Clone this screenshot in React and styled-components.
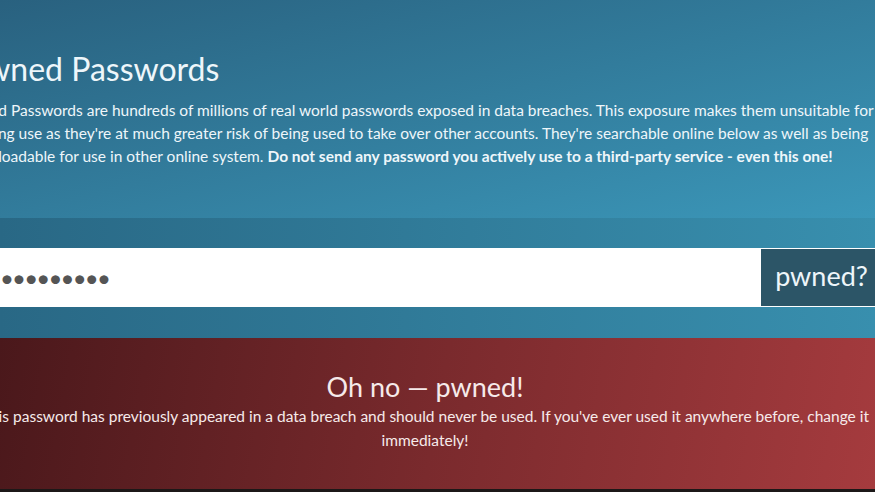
import styled, { createGlobalStyle } from "styled-components";

const GlobalStyle = createGlobalStyle`
  html, body {
    margin: 0;
    padding: 0;
    overflow: hidden;
    background: #1c1818;
  }
  body {
    font-family: Lato, "Open Sans", sans-serif;
  }
`;

const Page = styled.div`
  width: 100%;
`;

// the screenshot is a crop of a wider page, so the content box runs past both edges
const Container = styled.div`
  width: 930px;
  margin-left: -40px;
`;

const Hero = styled.section`
  background: linear-gradient(to bottom right, #29617f, #3b97b9);
`;

const HeroInner = styled(Container)`
  padding: 50px 0 50px;
  color: #eef6fa;
`;

const Title = styled.h1`
  font-size: 32px;
  font-weight: 400;
  line-height: 38px;
  margin: 0 0 11px;
  padding-left: 6px;
`;

const Lead = styled.p`
  font-size: 15.5px;
  line-height: 23px;
  margin: 0;
  b {
    font-weight: 700;
  }
`;

const SearchBand = styled.section`
  background: linear-gradient(to right, #296885, #388fae);
`;

const SearchRow = styled(Container)`
  display: flex;
  padding: 30px 0 31px;
`;

const PasswordInput = styled.input`
  flex: 1;
  height: 59px;
  box-sizing: border-box;
  border: 0;
  outline: none;
  background: #fff;
  padding: 0 0 0 40px;
  font-family: Lato, sans-serif;
  font-size: 24px;
  color: #555;
  letter-spacing: -1.8px;
`;

const PwnedButton = styled.button`
  width: 129px;
  height: 59px;
  border: 0;
  border-top: 1px solid #fff;
  border-bottom: 1px solid #fff;
  background: #2c5567;
  color: #eef6fa;
  font-family: Lato, sans-serif;
  font-size: 27px;
  padding: 0 8px 4px 0;
`;

const Result = styled.section`
  background: linear-gradient(100deg, #4a181b 0%, #7a2a2d 50%, #a53b3e 100%);
  height: 151px;
`;

const ResultInner = styled(Container)`
  padding-top: 33px;
  text-align: center;
  color: #f6eaea;
`;

const ResultTitle = styled.h2`
  font-size: 27px;
  font-weight: 400;
  line-height: 32px;
  margin: 0 0 1px;
`;

const ResultText = styled.p`
  font-size: 15.5px;
  line-height: 24px;
  margin: 0;
`;

export default function App() {
  return (
    <Page>
      <GlobalStyle />
      <Hero>
        <HeroInner>
          <Title>Pwned Passwords</Title>
          <Lead>
            Pwned Passwords are hundreds of millions of real world passwords exposed in data
            breaches. This exposure makes them unsuitable for ongoing use as they're at much
            greater risk of being used to take over other accounts. They're searchable online
            below as well as being downloadable for use in other online system.{" "}
            <b>Do not send any password you actively use to a third-party service - even this one!</b>
          </Lead>
        </HeroInner>
      </Hero>
      <SearchBand>
        <SearchRow>
          <PasswordInput type="password" value="password1" readOnly />
          <PwnedButton>pwned?</PwnedButton>
        </SearchRow>
      </SearchBand>
      <Result>
        <ResultInner>
          <ResultTitle>Oh no — pwned!</ResultTitle>
          <ResultText>
            This password has previously appeared in a data breach and should never be used. If
            you've ever used it anywhere before, change it immediately!
          </ResultText>
        </ResultInner>
      </Result>
    </Page>
  );
}
